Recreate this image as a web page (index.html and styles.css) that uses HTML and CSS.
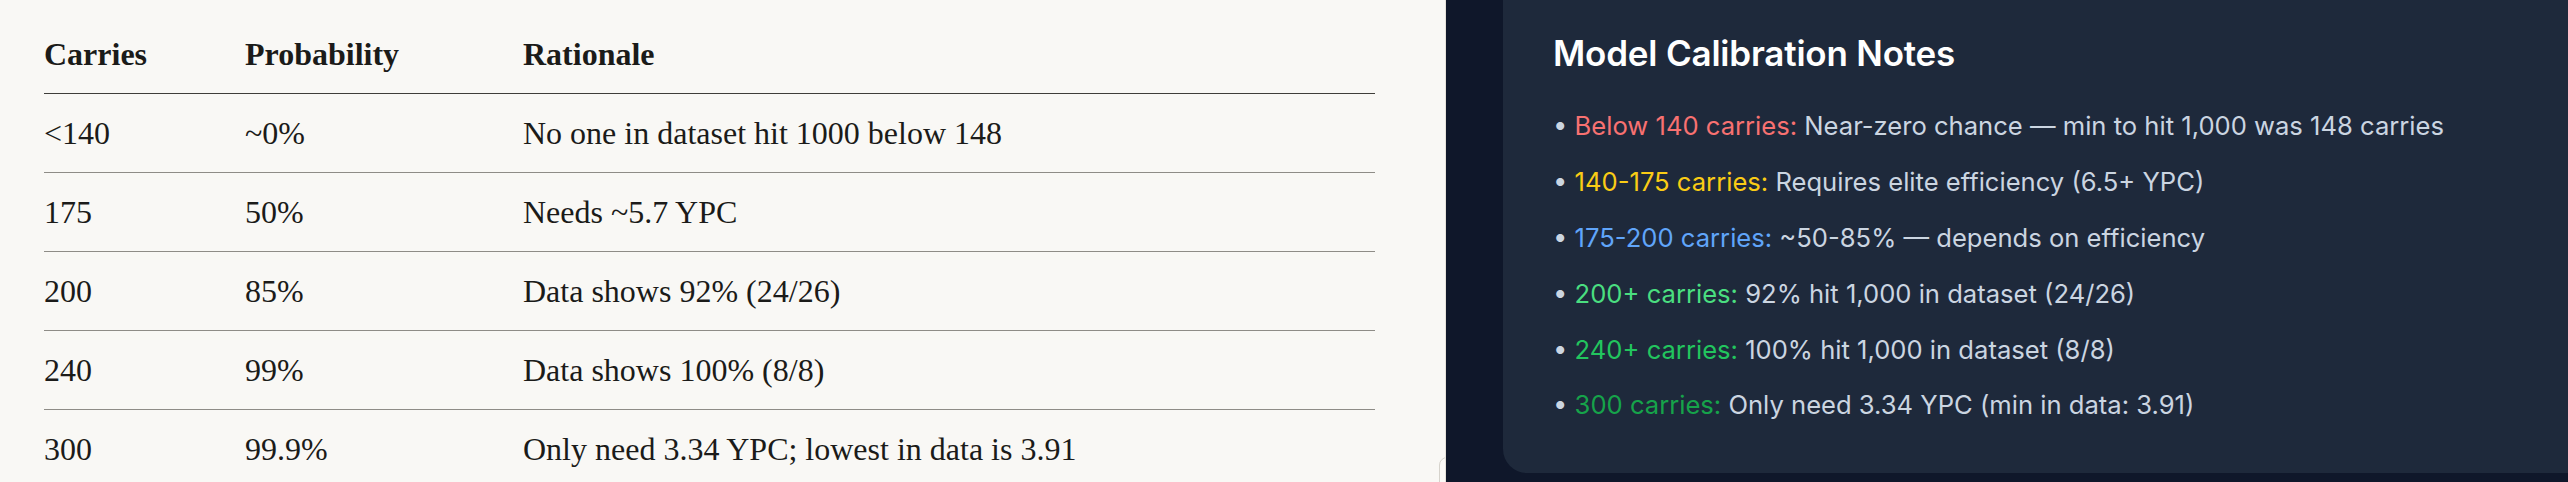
FILE: index.html
```html
<!DOCTYPE html>
<html lang="en">
<head>
<meta charset="utf-8">
<title>Carries probability</title>
<link rel="stylesheet" href="styles.css">
</head>
<body>
<div class="page">
  <section class="doc">
    <table class="prob">
      <thead>
        <tr><th class="c1">Carries</th><th class="c2">Probability</th><th>Rationale</th></tr>
      </thead>
      <tbody>
        <tr><td>&lt;140</td><td>~0%</td><td>No one in dataset hit 1000 below 148</td></tr>
        <tr><td>175</td><td>50%</td><td>Needs ~5.7 YPC</td></tr>
        <tr><td>200</td><td>85%</td><td>Data shows 92% (24/26)</td></tr>
        <tr><td>240</td><td>99%</td><td>Data shows 100% (8/8)</td></tr>
        <tr><td>300</td><td>99.9%</td><td>Only need 3.34 YPC; lowest in data is 3.91</td></tr>
      </tbody>
    </table>
    <div class="handle"></div>
  </section>
  <section class="dark">
    <div class="card">
      <h3 class="title">Model Calibration Notes</h3>
      <ul class="notes">
        <li><span class="dot">•</span> <span class="red">Below 140 carries:</span> Near-zero chance — min to hit 1,000 was 148 carries</li>
        <li><span class="dot">•</span> <span class="yellow">140-175 carries:</span> Requires elite efficiency (6.5+ YPC)</li>
        <li><span class="dot">•</span> <span class="blue">175-200 carries:</span> ~50-85% — depends on efficiency</li>
        <li><span class="dot">•</span> <span class="green1">200+ carries:</span> 92% hit 1,000 in dataset (24/26)</li>
        <li><span class="dot">•</span> <span class="green2">240+ carries:</span> 100% hit 1,000 in dataset (8/8)</li>
        <li><span class="dot">•</span> <span class="green3">300 carries:</span> Only need 3.34 YPC (min in data: 3.91)</li>
      </ul>
    </div>
  </section>
</div>
</body>
</html>
```
FILE: styles.css
```css
html, body {
  margin: 0;
  padding: 0;
  width: 2568px;
  height: 482px;
  overflow: hidden;
}
.page {
  display: flex;
  width: 2568px;
  height: 482px;
}
.doc {
  position: relative;
  width: 1446px;
  flex: none;
  background: #f9f8f5;
  border-right: 1px solid #e6e2da;
  padding: 15px 0 0 44px;
  box-sizing: border-box;
  overflow: hidden;
}
.prob {
  width: 1331px;
  border-collapse: collapse;
  font-family: "Liberation Serif", "Times New Roman", serif;
  font-size: 32px;
  color: #1b1b19;
  table-layout: fixed;
}
.prob th, .prob td {
  text-align: left;
  padding: 18px 0 17px 0;
  line-height: 43px;
  height: 43px;
  white-space: nowrap;
}
.prob th {
  font-weight: 700;
  border-bottom: 1.5px solid #3f3e3a;
}
.prob td {
  font-weight: 400;
  border-bottom: 1px solid #8e8c87;
}
.prob .c1 { width: 201px; }
.prob .c2 { width: 278px; }
.handle {
  position: absolute;
  left: 1439px;
  top: 457px;
  width: 14px;
  height: 40px;
  background: #fbfaf7;
  border: 1px solid #d6d3cc;
  border-radius: 8px;
}
.dark {
  flex: 1;
  background: #0f172a;
  padding-left: 57px;
  overflow: hidden;
}
.card {
  width: 1200px;
  height: 473px;
  box-sizing: border-box;
  background: #1e293b;
  border-radius: 0 0 24px 24px;
  padding: 30px 0 0 50px;
  font-family: Inter, "Noto Sans", sans-serif;
}
.title {
  margin: 0 0 31px 0;
  font-size: 35px;
  line-height: 46px;
  font-weight: 600;
  color: #ffffff;
  letter-spacing: -0.2px;
}
.notes {
  list-style: none;
  margin: 0;
  padding: 0;
  display: flex;
  flex-direction: column;
  gap: 17.5px;
}
.notes li {
  font-size: 25.6px;
  line-height: 38.4px;
  height: 38.4px;
  color: #cbd5e1;
  white-space: nowrap;
}
.dot { color: #cbd5e1; line-height: 0; }
.red { color: #f87171; }
.yellow { color: #facc15; }
.blue { color: #60a5fa; }
.green1 { color: #4ade80; }
.green2 { color: #22c55e; }
.green3 { color: #16a34a; }
```
